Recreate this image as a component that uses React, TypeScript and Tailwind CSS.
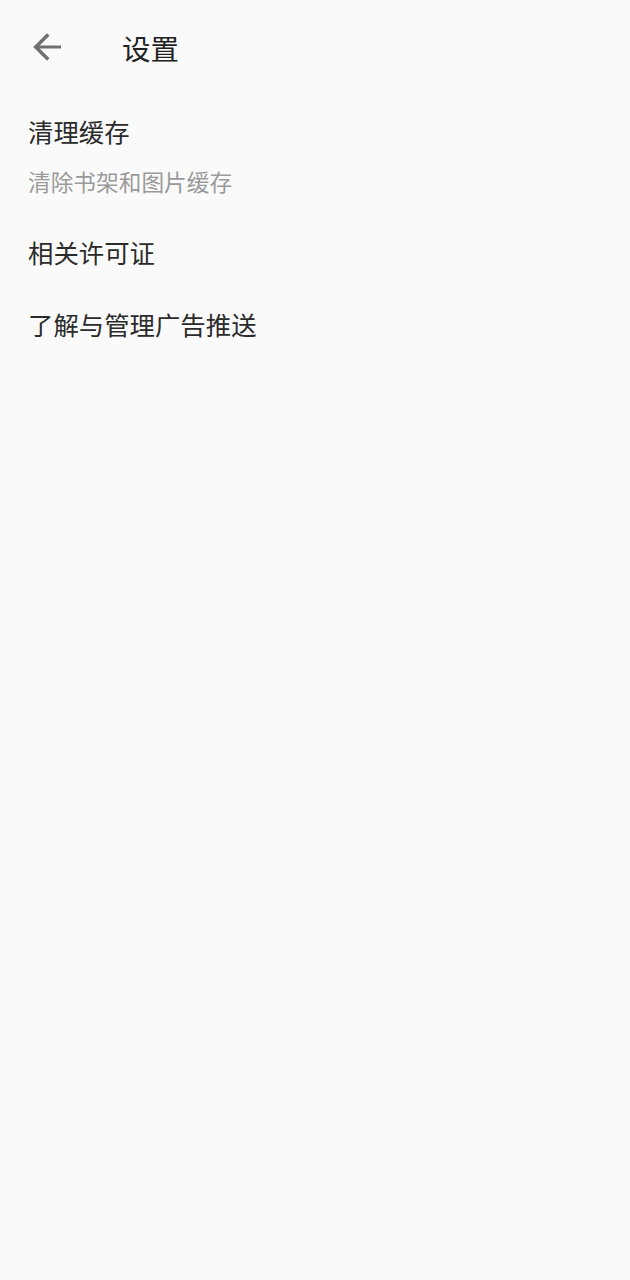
import React from "react";

export default function App() {
  const font = { fontFamily: '"Noto Sans CJK SC", "Noto Sans", sans-serif' };
  return (
    <div className="w-[630px] h-[1280px] bg-[#fafafa]" style={font}>
      <div className="h-[96px] flex items-center">
        <div className="w-[122px] flex items-center pl-[26px] -mt-[2px]">
          <svg width="42" height="42" viewBox="0 0 24 24">
            <path
              d="M20 11.1H7.83l5.59-5.59L12 4.1l-7.9 7.9 7.9 7.9 1.41-1.41L7.83 12.9H20z"
              fill="#707070"
            />
          </svg>
        </div>
        <div className="text-[28.5px] leading-[32px] text-[#222222]">设置</div>
      </div>
      <div className="flex flex-col">
        <div className="pl-[28px] pt-[20px] pb-[20px] flex flex-col gap-[22px]">
          <div className="text-[25.4px] leading-[30px] text-[#2b2b2b]">清理缓存</div>
          <div className="text-[22.7px] leading-[28px] text-[#9a9a9a]">清除书架和图片缓存</div>
        </div>
        <div className="pl-[28px] h-[72px] flex items-center">
          <div className="text-[25.4px] leading-[30px] text-[#2b2b2b]">相关许可证</div>
        </div>
        <div className="pl-[28px] h-[72px] flex items-center">
          <div className="text-[25.4px] leading-[30px] text-[#2b2b2b]">了解与管理广告推送</div>
        </div>
      </div>
    </div>
  );
}
